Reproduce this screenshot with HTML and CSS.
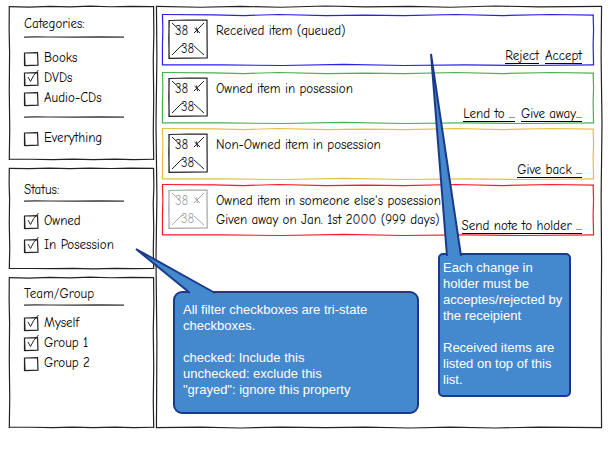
FILE: index.html
```html
<!DOCTYPE html>
<html lang="en">
<head>
<meta charset="utf-8">
<title>Item list wireframe</title>
<link rel="stylesheet" href="styles.css">
</head>
<body>
<svg class="defs" aria-hidden="true">
  <symbol id="frame" viewBox="0 0 100 100" preserveAspectRatio="none">
    <path vector-effect="non-scaling-stroke" d="M0 .4L14 .7L28 .2L42 .6L56 .1L70 .5L84 .2L100 .4"/>
    <path vector-effect="non-scaling-stroke" d="M0 99.500L15 99.500L30 99.700L44 99.400L58 99.800L73 99.400L86 99.700L100 99.500"/>
    <path vector-effect="non-scaling-stroke" d="M.2 0L.1 15L.4 30L.2 55L.5 80L.2 100M99.700 0L99.900 18L99.500 35L99.800 60L99.500 82L99.800 100"/>
  </symbol>
  <symbol id="mainframe" viewBox="0 0 100 100" preserveAspectRatio="none">
    <path vector-effect="non-scaling-stroke" d="M0 .1L10 .3L19 .1L28 .3L38 0L47 .2L57 .1L66 .3L76 0L86 .2L100 .1"/>
    <path vector-effect="non-scaling-stroke" d="M0 99.900L10 99.800L19 100L28 99.800L38 99.900L47 99.800L57 100L66 99.800L76 100L86 99.800L100 99.900"/>
    <path vector-effect="non-scaling-stroke" d="M.1 0L.2 12L0 28L.2 45L0 60L.2 80L.1 100M99.900 0L99.800 12L100 28L99.800 45L99.900 60L99.800 80L99.900 100"/>
  </symbol>
  <symbol id="rowframe" viewBox="0 0 100 100" preserveAspectRatio="none">
    <path vector-effect="non-scaling-stroke" d="M0 1L12 1.500L19 3L27 1L38 3L47 2L56 3L68 1L79 3L90 1L100 2"/>
    <path vector-effect="non-scaling-stroke" d="M0 98L14 98L28 99L42 97L56 99L70 98L84 99L100 98"/>
    <path vector-effect="non-scaling-stroke" d="M.1 1L.2 30L.1 60L.1 98M99.800 2L99.900 30L99.800 60L99.900 98"/>
  </symbol>
  <symbol id="rule" viewBox="0 0 100 4" preserveAspectRatio="none">
    <path d="M0 2.200L12 1.800L25 2L50 2.200L75 1.800L100 2.200"/>
  </symbol>
  <symbol id="box" viewBox="0 0 18 18">
    <path d="M1.500 4L14.500 3.600L15 16.200L2 16.600ZM1.500 4L1.500 17"/>
  </symbol>
  <symbol id="tick" viewBox="0 0 18 18">
    <path d="M5 8L7.500 12.500Q10 6 15.500 1"/>
  </symbol>
  <symbol id="thumb" viewBox="0 0 40 40">
    <path d="M1 1.500L20 1L39 1.200L39.200 39L20 39.200L1 39.400ZM1.200 1L.8 20L1.200 39.500"/>
    <path class="thin" d="M4 4L12 11.500M36 4L26 14M26.500 9L32 14M28.500 8.500L29.500 14M4 36L13 27L16 26M26 27L36 36"/>
  </symbol>
</svg>

<div class="board">
  <aside class="sidebar">
    <section class="panel categories">
      <svg class="frame" aria-hidden="true"><use href="#frame"/></svg>
      <h2>Categories:</h2>
      <svg class="rule" aria-hidden="true"><use href="#rule"/></svg>
      <div class="options">
        <label><span class="check"><input type="checkbox"><svg aria-hidden="true"><use href="#box"/><use class="tick" href="#tick"/></svg></span>Books</label>
        <label><span class="check"><input type="checkbox" checked><svg aria-hidden="true"><use href="#box"/><use class="tick" href="#tick"/></svg></span>DVDs</label>
        <label><span class="check"><input type="checkbox"><svg aria-hidden="true"><use href="#box"/><use class="tick" href="#tick"/></svg></span>Audio-CDs</label>
      </div>
      <svg class="rule" aria-hidden="true"><use href="#rule"/></svg>
      <div class="options">
        <label><span class="check"><input type="checkbox"><svg aria-hidden="true"><use href="#box"/><use class="tick" href="#tick"/></svg></span>Everything</label>
      </div>
    </section>

    <section class="panel status">
      <svg class="frame" aria-hidden="true"><use href="#frame"/></svg>
      <h2>Status:</h2>
      <svg class="rule" aria-hidden="true"><use href="#rule"/></svg>
      <div class="options">
        <label><span class="check"><input type="checkbox" checked><svg aria-hidden="true"><use href="#box"/><use class="tick" href="#tick"/></svg></span>Owned</label>
        <label><span class="check"><input type="checkbox" checked><svg aria-hidden="true"><use href="#box"/><use class="tick" href="#tick"/></svg></span>In Posession</label>
      </div>
    </section>

    <section class="panel team">
      <svg class="frame" aria-hidden="true"><use href="#frame"/></svg>
      <h2>Team/Group</h2>
      <svg class="rule" aria-hidden="true"><use href="#rule"/></svg>
      <div class="options">
        <label><span class="check"><input type="checkbox" checked><svg aria-hidden="true"><use href="#box"/><use class="tick" href="#tick"/></svg></span>Myself</label>
        <label><span class="check"><input type="checkbox" checked><svg aria-hidden="true"><use href="#box"/><use class="tick" href="#tick"/></svg></span>Group 1</label>
        <label><span class="check"><input type="checkbox"><svg aria-hidden="true"><use href="#box"/><use class="tick" href="#tick"/></svg></span>Group 2</label>
      </div>
    </section>
  </aside>

  <main class="list">
    <svg class="frame" aria-hidden="true"><use href="#mainframe"/></svg>
    <article class="item received">
      <svg class="frame" aria-hidden="true"><use href="#rowframe"/></svg>
      <svg class="thumb" viewBox="0 0 40 40"><use href="#thumb"/><text x="7" y="16">38</text><text x="13" y="34">38</text></svg>
      <div class="info"><p>Received item (queued)</p></div>
      <nav><a href="#">Reject</a><a href="#">Accept</a></nav>
    </article>
    <article class="item owned">
      <svg class="frame" aria-hidden="true"><use href="#rowframe"/></svg>
      <svg class="thumb" viewBox="0 0 40 40"><use href="#thumb"/><text x="7" y="16">38</text><text x="13" y="34">38</text></svg>
      <div class="info"><p>Owned item in posession</p></div>
      <nav><a href="#">Lend to ...</a><a href="#">Give away...</a></nav>
    </article>
    <article class="item borrowed">
      <svg class="frame" aria-hidden="true"><use href="#rowframe"/></svg>
      <svg class="thumb" viewBox="0 0 40 40"><use href="#thumb"/><text x="7" y="16">38</text><text x="13" y="34">38</text></svg>
      <div class="info"><p>Non-Owned item in posession</p></div>
      <nav><a href="#">Give back ...</a></nav>
    </article>
    <article class="item lent">
      <svg class="frame" aria-hidden="true"><use href="#rowframe"/></svg>
      <svg class="thumb" viewBox="0 0 40 40"><use href="#thumb"/><text x="7" y="16">38</text><text x="13" y="34">38</text></svg>
      <div class="info"><p>Owned item in someone else's posession</p><p>Given away on Jan. 1st 2000 (999 days)</p></div>
      <nav><a href="#">Send note to holder ...</a></nav>
    </article>
  </main>

  <div class="note filters">
    <svg class="tail" width="84" height="48" viewBox="0 0 84 48" aria-hidden="true"><path d="M55 47L1 3L80 47"/></svg>
    <p>All filter checkboxes are tri-state checkboxes.</p>
    <p>checked: Include this<br>unchecked: exclude this<br>"grayed": ignore this property</p>
  </div>
  <div class="note changes">
    <svg class="tail" width="34" height="204" viewBox="0 0 34 204" aria-hidden="true"><path d="M17 203L1 1L31 203"/></svg>
    <p>Each change in holder must be acceptes/rejected by the receipient</p>
    <p>Received items are listed on top of this list.</p>
  </div>
</div>
</body>
</html>
```
FILE: styles.css
```css
* { box-sizing: border-box; }

body {
  margin: 0;
  background: #fff;
  color: #000;
  font: 13px/20px "Comic Sans MS", "Comic Neue", "Noto Sans", sans-serif;
}

h2, p { margin: 0; font-size: inherit; font-weight: normal; }

svg { fill: none; stroke: #222; stroke-width: 1.2; overflow: visible; }
symbol { overflow: visible; }
.defs { position: absolute; width: 0; height: 0; }

.board {
  position: relative;
  display: flex;
  gap: 2px;
  padding: 6px 6px 32px 9px;
}

.frame { position: absolute; inset: 0; width: 100%; height: 100%; pointer-events: none; }

.sidebar {
  flex: 0 0 145px;
  display: flex;
  flex-direction: column;
  gap: 8px;
}

.panel { position: relative; padding: 0 15px; }
.categories { padding-top: 8px; min-height: 154px; }
.status { padding-top: 12px; min-height: 101px; }
.team { padding-top: 7px; min-height: 151px; }

.rule { display: block; width: 100px; height: 4px; stroke: #333; }
.categories .rule { margin-top: 2px; }
.panel h2 { height: 19px; }

.options { display: flex; flex-direction: column; }
.options label { display: flex; align-items: center; gap: 3px; height: 20px; }
.categories .options { padding-top: 9px; padding-bottom: 5px; }
.status .options, .team .options { padding-top: 6px; }
.status .options label { height: 24px; }

.check { position: relative; width: 18px; height: 18px; margin-left: -1px; }
.check input { appearance: none; display: block; width: 18px; height: 18px; margin: 0; }
.check svg { position: absolute; inset: 0; width: 18px; height: 18px; pointer-events: none; }
.tick { visibility: hidden; stroke-width: 1; }
.check input:checked + svg .tick { visibility: visible; }

.list {
  position: relative;
  flex: 1;
  display: flex;
  flex-direction: column;
  gap: 4px;
  padding: 8px 8px 0 6px;
}

.item {
  position: relative;
  display: flex;
  min-height: 52px;
  padding: 5px 12px 0 6px;
}
.received { margin-bottom: 2px; }
.received .frame { stroke: #2a1ff0; }
.owned .frame { stroke: #4caf50; }
.borrowed .frame { stroke: #e5c040; }
.lent .frame { stroke: #ff1a2a; }

.thumb { flex: none; width: 40px; height: 40px; margin-right: 8px; }
.thumb text { fill: #222; stroke: none; font-size: 13px; }
.thin { stroke-width: 1; }
.lent .thumb { opacity: 0.4; }

.info { flex: 1; padding-top: 2px; line-height: 19px; white-space: nowrap; }

.item nav { align-self: flex-end; display: flex; gap: 6px; white-space: nowrap; padding-bottom: 2px; }
.item a {
  color: #000;
  text-decoration: none;
  line-height: 15px;
  border-bottom: 1px solid #000;
}

.note {
  position: absolute;
  border: 2px solid #1c3a8a;
  background: #4489ce;
  color: #fff;
  font: 13px/16px "Liberation Sans", Arial, sans-serif;
}
.note p + p { margin-top: 16px; }
.filters { left: 173px; top: 291px; width: 246px; height: 123px; padding: 9px 8px; border-radius: 9px; }
.changes { left: 438px; top: 253px; width: 133px; height: 144px; padding: 5px 3px; border-radius: 5px; }
.tail { position: absolute; fill: #4489ce; stroke: #1c3a8a; stroke-width: 2; }
.filters .tail { left: -40px; top: -47px; }
.changes .tail { left: -10px; top: -202px; }
```
